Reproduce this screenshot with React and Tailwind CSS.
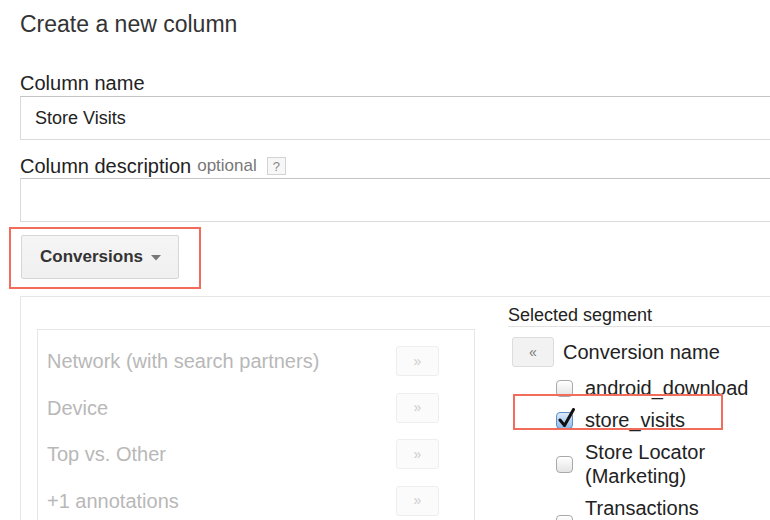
import React from "react";

const font = { fontFamily: '"Liberation Sans", Arial, Helvetica, sans-serif' };

function Checkbox({ checked }) {
  if (checked) {
    return (
      <div className="relative h-[17px] w-[17px] shrink-0 rounded-[4px] border border-[#5f8fc9] bg-gradient-to-b from-[#dceaf9] to-[#8fbbea]">
        <svg className="absolute -top-[5px] left-[1px]" width="18" height="21" viewBox="0 0 18 21">
          <path d="M2 12 L6.5 17.5 L15.5 1.5" fill="none" stroke="#111" strokeWidth="3" strokeLinecap="round" strokeLinejoin="round" />
        </svg>
      </div>
    );
  }
  return (
    <div className="h-[17px] w-[17px] shrink-0 rounded-[4px] border border-[#a9a9a9] bg-gradient-to-b from-white to-[#e4e4e4] shadow-[inset_0_1px_0_#fff]" />
  );
}

function AddRow({ label }) {
  return (
    <div className="flex h-[46.5px] items-center justify-between pl-[9px] pr-[35px]">
      <span className="text-[20px] leading-[24px] text-[#b8b8b8]">{label}</span>
      <div className="flex h-[30px] w-[43px] items-center justify-center rounded-[3px] border border-[#eeeeee] bg-[#fbfbfb] text-[14px] text-[#cdcdcd]">
        »
      </div>
    </div>
  );
}

export default function App() {
  return (
    <div style={font} className="relative h-[520px] w-[770px] overflow-hidden bg-white text-[#222]">
      <div className="w-[900px] pl-[20px] pt-[10px]">
        <h1 className="text-[23px] leading-[28px] text-[#333]">Create a new column</h1>

        <div className="mt-[33px] text-[20px] leading-[24px] text-[#222]">Column name</div>
        <div className="mt-[1px] flex h-[44px] items-center border border-[#dadada] border-t-[#c4c4c4] bg-white pl-[14px] text-[18px] text-[#222]">
          Store Visits
        </div>

        <div className="mt-[14px] flex items-center text-[20px] leading-[24px] text-[#222]">
          <span>Column description</span>
          <span className="ml-[6px] text-[17px] text-[#777]">optional</span>
          <span className="ml-[10px] flex h-[18px] w-[19px] items-center justify-center border border-[#d3d3d3] bg-[#f7f7f7] text-[13px] leading-none text-[#888]">
            ?
          </span>
        </div>
        <div className="h-[44px] border border-[#dadada] border-t-[#c4c4c4] bg-white" />

        <div className="-ml-[11px] mt-[5px] h-[62px] w-[192px] border-2 border-[#f26c5c] pl-[10px] pt-[6px]">
          <div className="flex h-[44px] w-[158px] items-center rounded-[2px] border border-[#d6d6d6] bg-gradient-to-b from-[#f5f5f5] to-[#f0f0f0] pl-[18px]">
            <span className="text-[17px] font-bold text-[#333]">Conversions</span>
            <svg className="ml-[8px] mt-[1px]" width="10" height="6" viewBox="0 0 10 6">
              <path d="M0 0 L10 0 L5 5.5 Z" fill="#777" />
            </svg>
          </div>
        </div>

        <div className="mt-[7px] flex h-[260px] items-start border border-[#e6e6e6] pl-[16px]">
          <div className="pt-[32px]">
            <div className="h-[300px] w-[438px] border border-[#e6e6e6] pt-[8px]">
              <AddRow label="Network (with search partners)" />
              <AddRow label="Device" />
              <AddRow label="Top vs. Other" />
              <AddRow label="+1 annotations" />
            </div>
          </div>

          <div className="relative ml-[33px] flex-1 pt-[8px]">
            <div className="border-b border-[#e2e2e2] text-[18px] leading-[21px] text-[#222]">Selected segment</div>

            <div className="ml-[4px] mt-[10px] flex items-center">
              <div className="flex h-[30px] w-[42px] items-center justify-center rounded-[3px] border border-[#dcdcdc] bg-[#f2f2f2] text-[14px] text-[#777]">
                «
              </div>
              <span className="ml-[9px] text-[20px] leading-[24px] text-[#222]">Conversion name</span>
            </div>

            <div className="ml-[48px] mt-[9px] flex flex-col gap-[8px] text-[20px] leading-[24px] text-[#222]">
              <div className="flex items-center gap-[12px]">
                <Checkbox />
                <span>android_download</span>
              </div>
              <div className="flex items-center gap-[12px]">
                <Checkbox checked />
                <span>store_visits</span>
              </div>
              <div className="flex items-center gap-[12px]">
                <Checkbox />
                <span>
                  Store Locator
                  <br />
                  (Marketing)
                </span>
              </div>
              <div className="flex items-start gap-[12px]">
                <div className="mt-[19px]">
                  <Checkbox />
                </div>
                <span>Transactions</span>
              </div>
            </div>

            <div className="pointer-events-none absolute left-[5px] top-[97px] h-[36px] w-[210px] border-2 border-[#f26c5c]" />
          </div>
        </div>
      </div>
    </div>
  );
}
